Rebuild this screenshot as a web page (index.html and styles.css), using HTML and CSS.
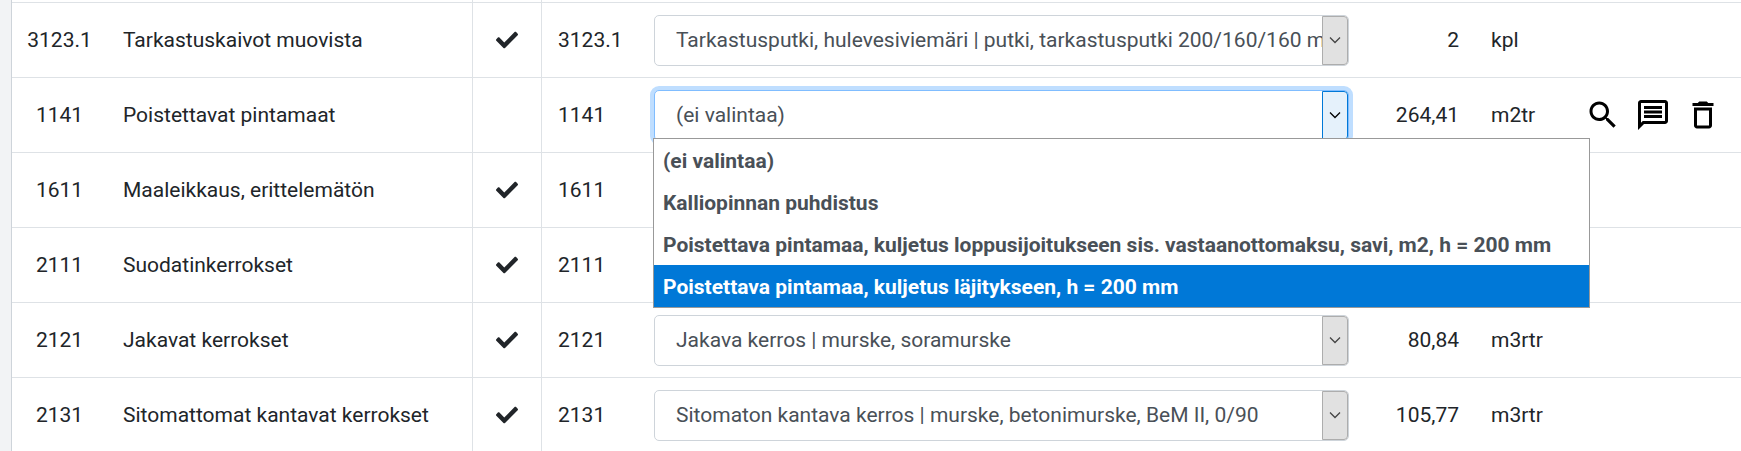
FILE: index.html
```html
<!DOCTYPE html>
<html lang="fi">
<head>
  <meta charset="UTF-8">
  <meta name="viewport" content="width=device-width, initial-scale=1">
  <title>Määräluettelo</title>
  <link rel="stylesheet" href="styles.css">
</head>
<body>
  <!-- shared icons -->
  <svg class="sprite" aria-hidden="true">
    <symbol id="check" viewBox="0 0 512 512">
      <path d="M173.898 439.404l-166.4-166.4c-9.997-9.997-9.997-26.206 0-36.204l36.203-36.204c9.997-9.998 26.207-9.998 36.204 0L192 312.69 432.095 72.596c9.997-9.997 26.207-9.997 36.204 0l36.203 36.204c9.997 9.997 9.997 26.206 0 36.204l-294.4 294.401c-9.998 9.997-26.207 9.997-36.204-.001z"/>
    </symbol>
    <symbol id="chevron" viewBox="0 0 12 8">
      <path d="M1 1.500l5 5 5-5" fill="none" stroke="currentColor" stroke-width="1.3"/>
    </symbol>
  </svg>

  <main class="page">
    <table class="items">
      <colgroup>
        <col class="col-number">
        <col class="col-name">
        <col class="col-check">
        <col class="col-code">
        <col class="col-product">
        <col class="col-amount">
        <col class="col-unit">
        <col class="col-actions">
      </colgroup>
      <thead>
        <tr><td></td><td class="line"></td><td class="line"></td><td></td><td></td><td></td><td></td><td></td></tr>
      </thead>
      <tbody>
        <tr>
          <td class="code">3123.1</td>
          <td class="line">Tarkastuskaivot muovista</td>
          <td class="check line"><svg class="icon-check"><use href="#check"/></svg></td>
          <td>3123.1</td>
          <td>
            <div class="select">
              <select aria-label="Tuote 3123.1">
                <option>Tarkastusputki, hulevesiviemäri | putki, tarkastusputki 200/160/160 mm</option>
              </select>
              <span class="arrow"><svg><use href="#chevron"/></svg></span>
            </div>
          </td>
          <td class="amount">2</td>
          <td>kpl</td>
          <td></td>
        </tr>
        <tr>
          <td class="code">1141</td>
          <td class="line">Poistettavat pintamaat</td>
          <td class="check line"></td>
          <td>1141</td>
          <td>
            <div class="select open">
              <select aria-label="Tuote 1141">
                <option>(ei valintaa)</option>
              </select>
              <span class="arrow"><svg><use href="#chevron"/></svg></span>
              <ul class="menu" role="listbox" aria-label="Tuotteet">
                <li role="option">(ei valintaa)</li>
                <li role="option">Kalliopinnan puhdistus</li>
                <li role="option">Poistettava pintamaa, kuljetus loppusijoitukseen sis. vastaanottomaksu, savi, m2, h = 200 mm</li>
                <li role="option" class="active" aria-selected="true">Poistettava pintamaa, kuljetus läjitykseen, h = 200 mm</li>
              </ul>
            </div>
          </td>
          <td class="amount">264,41</td>
          <td>m2tr</td>
          <td class="actions">
            <div class="buttons">
              <button type="button" aria-label="Hae">
                <svg viewBox="0 0 24 24"><path d="M15.500 14h-.79l-.28-.27C15.410 12.590 16 11.110 16 9.500 16 5.910 13.090 3 9.500 3S3 5.910 3 9.500 5.910 16 9.500 16c1.610 0 3.090-.59 4.230-1.570l.27.28v.79l5 4.990L20.490 19l-4.990-5zm-6 0C7.010 14 5 11.990 5 9.500S7.010 5 9.500 5 14 7.010 14 9.500 11.990 14 9.500 14z"/></svg>
              </button>
              <button type="button" aria-label="Kommentti">
                <svg viewBox="0 0 24 24"><path fill-rule="evenodd" d="M4 2h16c1.100 0 2 .9 2 2v12c0 1.100-.9 2-2 2H6l-4 4V4c0-1.100.9-2 2-2zm0 15.170L5.170 16H20V4H4v13.170zM6 6h12v2H6V6zm0 3h12v2H6V9zm0 3h12v2H6v-2z"/></svg>
              </button>
              <button type="button" aria-label="Poista">
                <svg viewBox="0 0 24 24"><path fill-rule="evenodd" d="M6 19c0 1.100.9 2 2 2h8c1.100 0 2-.9 2-2V7H6v12zM8 9h8v10H8V9zm7.500-5l-1-1h-5l-1 1H5v2h14V4h-3.500z"/></svg>
              </button>
            </div>
          </td>
        </tr>
        <tr>
          <td class="code">1611</td>
          <td class="line">Maaleikkaus, erittelemätön</td>
          <td class="check line"><svg class="icon-check"><use href="#check"/></svg></td>
          <td>1611</td>
          <td></td>
          <td class="amount"></td>
          <td></td>
          <td></td>
        </tr>
        <tr>
          <td class="code">2111</td>
          <td class="line">Suodatinkerrokset</td>
          <td class="check line"><svg class="icon-check"><use href="#check"/></svg></td>
          <td>2111</td>
          <td></td>
          <td class="amount"></td>
          <td></td>
          <td></td>
        </tr>
        <tr>
          <td class="code">2121</td>
          <td class="line">Jakavat kerrokset</td>
          <td class="check line"><svg class="icon-check"><use href="#check"/></svg></td>
          <td>2121</td>
          <td>
            <div class="select">
              <select aria-label="Tuote 2121">
                <option>Jakava kerros | murske, soramurske</option>
              </select>
              <span class="arrow"><svg><use href="#chevron"/></svg></span>
            </div>
          </td>
          <td class="amount">80,84</td>
          <td>m3rtr</td>
          <td></td>
        </tr>
        <tr>
          <td class="code">2131</td>
          <td class="line">Sitomattomat kantavat kerrokset</td>
          <td class="check line"><svg class="icon-check"><use href="#check"/></svg></td>
          <td>2131</td>
          <td>
            <div class="select">
              <select aria-label="Tuote 2131">
                <option>Sitomaton kantava kerros | murske, betonimurske, BeM II, 0/90</option>
              </select>
              <span class="arrow"><svg><use href="#chevron"/></svg></span>
            </div>
          </td>
          <td class="amount">105,77</td>
          <td>m3rtr</td>
          <td></td>
        </tr>
      </tbody>
    </table>
  </main>
</body>
</html>
```
FILE: styles.css
```css
*, *::before, *::after { box-sizing: border-box; }

body {
  margin: 0;
  font-family: Roboto, "Liberation Sans", sans-serif;
  font-size: 21px;
  line-height: 30px;
  color: #212529;
  background: #f2f3f5;
}

.sprite { display: none; }

.page {
  height: 100vh;
  padding-left: 11px;
  overflow: hidden;
}

/* table */
.items {
  width: 100%;
  table-layout: fixed;
  border-spacing: 0;
  border-left: 1px solid #ced4da;
  background: #fff;
}
.col-number { width: 95px; }
.col-name { width: 366px; }
.col-check { width: 69px; }
.col-code { width: 96px; }
.col-amount { width: 110px; }
.col-unit { width: 98px; }
.col-actions { width: 168px; }

td {
  height: 75px;
  padding: 0 16px;
  border-bottom: 1px solid #dee2e6;
  vertical-align: middle;
  white-space: nowrap;
}
thead td { height: 3px; }
td.line { border-right: 1px solid #dee2e6; }
td.code { padding: 0; text-align: center; }
td.check { padding: 0; text-align: center; }
td.amount { text-align: right; }
td.actions { padding: 0 12px; }

.icon-check {
  display: block;
  width: 22px;
  height: 22px;
  margin: 0 auto;
  fill: #212529;
}

/* product select */
.select { position: relative; }
.select select {
  display: block;
  width: 100%;
  height: 51px;
  padding: 0 26px 0 21px;
  appearance: none;
  border: 1px solid #ced4da;
  border-radius: 5px;
  background: #fff;
  color: #495057;
  font: inherit;
}
.arrow {
  position: absolute;
  top: 1px;
  right: 1px;
  bottom: 1px;
  width: 26px;
  display: flex;
  align-items: center;
  justify-content: center;
  border: 1px solid #adadad;
  border-radius: 0 4px 4px 0;
  background: #e1e1e1;
  color: #444;
  pointer-events: none;
}
.arrow svg { width: 12px; height: 8px; }

.open select {
  border-color: #80bdff;
  box-shadow: 0 0 0 4px #bfdeff;
}
.open .arrow {
  border-color: #0078d7;
  background: #e5f1fb;
  color: #000;
}

.menu {
  position: absolute;
  top: 48px;
  left: -1px;
  z-index: 1;
  margin: 0;
  padding: 0;
  list-style: none;
  border: 1px solid #999;
  background: #fff;
  color: #495057;
  font-weight: 700;
}
.menu li {
  padding: 7px 38px 5px 9px;
}
.menu .active { background: #0078d7; color: #fff; }

/* row buttons */
.buttons { display: flex; gap: 14px; }
.buttons button {
  padding: 0;
  border: 0;
  background: none;
  cursor: pointer;
}
.buttons svg { display: block; width: 36px; height: 36px; }
```
